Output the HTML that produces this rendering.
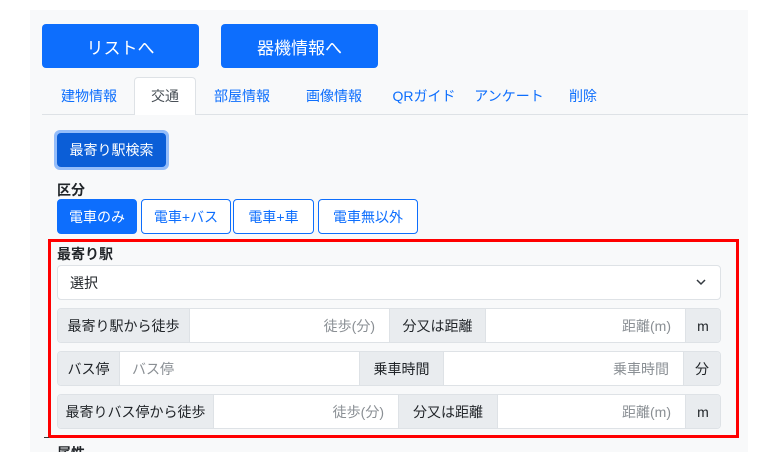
<!DOCTYPE html><html><head><meta charset="utf-8"><style>
*{box-sizing:border-box;margin:0;padding:0}
body{width:781px;height:470px;background:#fff;font-family:"Liberation Sans","Noto Sans CJK JP",sans-serif;font-size:14px;color:#212529;position:relative;overflow:hidden}
.a{position:absolute}
.panel{left:30px;top:10px;width:718px;height:442px;background:#f8f9fa}
.bb{background:#0d6efd;color:#fff;border-radius:4px;display:flex;align-items:center;justify-content:center;font-size:17px}
.tab{top:77px;height:38px;display:flex;align-items:center;justify-content:center;color:#0d6efd;font-size:14px}
.g{display:flex;align-items:center;justify-content:center;border:1px solid #0d6efd;border-radius:4px;color:#0d6efd;font-size:14px;background:#fff}
.row{left:57px;width:664px;height:35px;display:flex;border:1px solid #dee2e6;border-radius:4px;overflow:hidden;background:#fff}
.l{background:#e9ecef;display:flex;align-items:center;justify-content:center;font-size:14px;color:#212529;border-right:1px solid #dee2e6}
.i{display:flex;align-items:center;justify-content:flex-end;padding-right:14px;color:#8a8f94;font-size:14px;border-right:1px solid #dee2e6}
</style></head><body>
<div class="a panel"></div>
<div class="a bb" style="left:42px;top:24px;width:157px;height:44px">リストへ</div>
<div class="a bb" style="left:221px;top:24px;width:157px;height:44px">器機情報へ</div>
<div class="a" style="left:42px;top:114px;width:706px;height:1px;background:#dee2e6"></div>
<div class="a" style="left:134px;top:77px;width:62px;height:38px;background:#fff;border:1px solid #dee2e6;border-bottom:none;border-radius:4px 4px 0 0"></div>
<div class="a tab" style="left:50px;width:78px">建物情報</div>
<div class="a tab" style="left:134px;width:62px;color:#495057">交通</div>
<div class="a tab" style="left:203px;width:78px">部屋情報</div>
<div class="a tab" style="left:295px;width:78px">画像情報</div>
<div class="a tab" style="left:388px;width:72px">QRガイド</div>
<div class="a tab" style="left:470px;width:78px">アンケート</div>
<div class="a tab" style="left:558px;width:50px">削除</div>
<div class="a" style="left:54px;top:130px;width:115px;height:40px;border-radius:6px;background:#94bdfa"></div>
<div class="a bb" style="left:57px;top:133px;width:109px;height:34px;background:#0b5ed7;font-size:14px">最寄り駅検索</div>
<div class="a" style="left:57px;top:180px;font-weight:bold;font-size:14px">区分</div>
<div class="a g" style="left:57px;top:199px;width:80px;height:35px;background:#0d6efd;color:#fff">電車のみ</div>
<div class="a g" style="left:141px;top:199px;width:90px;height:35px">電車+バス</div>
<div class="a g" style="left:233px;top:199px;width:81px;height:35px">電車+車</div>
<div class="a g" style="left:318px;top:199px;width:100px;height:35px">電車無以外</div>
<div class="a" style="left:48px;top:239px;width:691px;height:199px;border:3px solid #f00"></div>
<div class="a" style="left:57px;top:244px;font-weight:bold;font-size:14px">最寄り駅</div>
<div class="a" style="left:57px;top:265px;width:664px;height:35px;background:#fff;border:1px solid #dee2e6;border-radius:4px;display:flex;align-items:center;padding-left:12px;font-size:14px">選択<svg style="position:absolute;right:14px;top:13px" width="10" height="7" viewBox="0 0 10 7"><path d="M1 1l4 4 4-4" fill="none" stroke="#343a40" stroke-width="1.5"/></svg></div>
<div class="a row" style="top:308px"><div class="l" style="width:132px">最寄り駅から徒歩</div><div class="i" style="width:200px">徒歩(分)</div><div class="l" style="width:96px">分又は距離</div><div class="i" style="width:200px">距離(m)</div><div class="l" style="flex:1;border:none">m</div></div>
<div class="a row" style="top:351px"><div class="l" style="width:62px">バス停</div><div class="i" style="width:240px;justify-content:flex-start;padding-left:12px">バス停</div><div class="l" style="width:84px">乗車時間</div><div class="i" style="width:240px">乗車時間</div><div class="l" style="flex:1;border:none">分</div></div>
<div class="a row" style="top:394px"><div class="l" style="width:156px">最寄りバス停から徒歩</div><div class="i" style="width:185px">徒歩(分)</div><div class="l" style="width:99px">分又は距離</div><div class="i" style="width:188px">距離(m)</div><div class="l" style="flex:1;border:none">m</div></div>
<div class="a" style="left:44px;top:437px;width:5px;height:1px;background:#333"></div>
<div class="a" style="left:57px;top:446px;font-weight:bold;font-size:14px;height:6px;overflow:hidden;line-height:14px">属性</div>
</body></html>
